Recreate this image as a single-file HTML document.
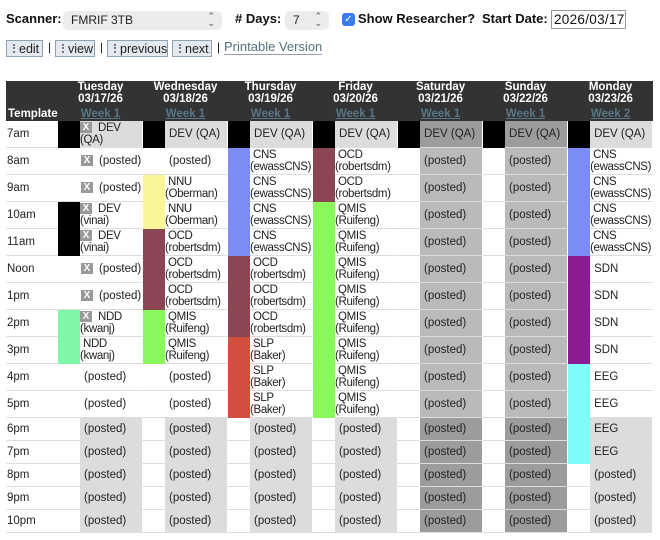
<!DOCTYPE html>
<html><head><meta charset="utf-8"><style>
*{box-sizing:border-box}
body{margin:0;width:660px;height:540px;background:#fff;font-family:"Liberation Sans",Arial,sans-serif;color:#222;position:relative;overflow:hidden}
.a{position:absolute}
.lbl{font-weight:bold;font-size:13px;color:#111}
.sel{background:#ececec;border-radius:5px;font-size:12px;padding:2px 0 0 8px;height:19px}
.sel i{position:absolute;right:7px;top:2px;font-style:normal;font-size:9px;color:#555;line-height:7px}
.btn{top:40px;height:17px;border:1px solid #8ea3b3;background:#e3e9ef;font-size:12.5px;padding:1px 2px 0 12px;color:#222}
.btn:before{content:"";position:absolute;left:6px;top:3px;width:2px;height:9px;border-left:2px dotted #778}
table{position:absolute;left:6px;top:81px;border-collapse:separate;border-spacing:0;table-layout:fixed;width:647px;font-size:11.5px}
th{background:#333;color:#fff;font-size:11.5px;line-height:12px;height:40px;vertical-align:bottom;padding:0 0 1px;font-weight:bold;overflow:hidden}
th u{color:#5a7787;display:block;margin-top:3px}
tr{height:27px}
tr.s{height:23px}
td{border-bottom:1px solid #ddd;padding:0;line-height:12.5px;vertical-align:middle;white-space:nowrap;overflow:hidden}
td.t{padding-left:1px}
td.c{border-right:1px solid #fff;padding-left:4px}
td.c2{border-right:1px solid #fff;padding-left:0;letter-spacing:-0.35px}
td.c2 span{padding-left:3px}
.x{display:inline-block;width:12px;height:11px;background:#999;color:#fff;font-weight:bold;font-size:10px;line-height:11px;text-align:center;margin:0 6px 0 -3px;vertical-align:top;letter-spacing:0}
.k{background:#000;border-bottom-color:#000}.y{background:#f9f59a;border-bottom-color:#f9f59a}.m{background:#8b4654;border-bottom-color:#8b4654}
.g{background:#88f85a;border-bottom-color:#88f85a}.b{background:#7b8cf7;border-bottom-color:#7b8cf7}.r{background:#d44d3f;border-bottom-color:#d44d3f}
.p{background:#8b1c93;border-bottom-color:#8b1c93}.cy{background:#80fbfc;border-bottom-color:#80fbfc}.mt{background:#7ff7a8;border-bottom-color:#7ff7a8}
.d{background:#dcdcdc}.L{background:#bababa}.D{background:#9c9c9c}
</style></head><body>
<div class="a lbl" style="left:6px;top:11px">Scanner:</div>
<div class="a sel" style="left:63px;top:11px;width:159px">FMRIF 3TB<i>⌃<br>⌄</i></div>
<div class="a lbl" style="left:235px;top:11px"># Days:</div>
<div class="a sel" style="left:285px;top:11px;width:44px">7<i>⌃<br>⌄</i></div>
<div class="a" style="left:342px;top:13px;width:13px;height:13px;border-radius:3px;background:#3b7cf0;color:#fff;font-size:10px;line-height:13px;text-align:center">✓</div>
<div class="a lbl" style="left:358px;top:11px">Show Researcher?</div>
<div class="a lbl" style="left:482px;top:11px">Start Date:</div>
<div class="a" style="left:551px;top:10px;width:75px;height:19px;border:1px solid #999;font-size:13.5px;padding:1px 0 0 2px;overflow:hidden;white-space:nowrap;letter-spacing:0.3px;color:#111">2026/03/17</div>
<div class="a btn" style="left:6px;width:37px">edit</div>
<div class="a" style="left:48px;top:40px;font-size:12px">|</div>
<div class="a btn" style="left:55px;width:40px">view</div>
<div class="a" style="left:100px;top:40px;font-size:12px">|</div>
<div class="a btn" style="left:107px;width:61px">previous</div>
<div class="a btn" style="left:172px;width:40px">next</div>
<div class="a" style="left:217px;top:40px;font-size:12px">|</div>
<div class="a" style="left:224px;top:40px;font-size:13px;color:#557080;border-bottom:1px solid #99a;line-height:14px">Printable Version</div>
<table>
<colgroup><col style="width:52px"><col style="width:22px"><col style="width:63px"><col style="width:22px"><col style="width:63px"><col style="width:22px"><col style="width:63px"><col style="width:22px"><col style="width:63px"><col style="width:22px"><col style="width:63px"><col style="width:22px"><col style="width:63px"><col style="width:22px"><col style="width:63px"></colgroup>
<tr style="height:40px"><th style="text-align:left;padding-left:2px">Template</th><th colspan="2">Tuesday<br>03/17/26<u>Week 1</u></th><th colspan="2">Wednesday<br>03/18/26<u>Week 1</u></th><th colspan="2">Thursday<br>03/19/26<u>Week 1</u></th><th colspan="2">Friday<br>03/20/26<u>Week 1</u></th><th colspan="2">Saturday<br>03/21/26<u>Week 1</u></th><th colspan="2">Sunday<br>03/22/26<u>Week 1</u></th><th colspan="2">Monday<br>03/23/26<u>Week 2</u></th></tr>
<tr><td class="t">7am</td><td class="k"></td><td class="c2 d"><span><b class="x">X</b></span>DEV<br>(QA)</td><td class="k"></td><td class="c d">DEV (QA)</td><td class="k"></td><td class="c d">DEV (QA)</td><td class="k"></td><td class="c d">DEV (QA)</td><td class="k"></td><td class="c D">DEV (QA)</td><td class="k"></td><td class="c D">DEV (QA)</td><td class="k"></td><td class="c d">DEV (QA)</td></tr>
<tr><td class="t">8am</td><td></td><td class="c"><b class="x">X</b>(posted)</td><td></td><td class="c">(posted)</td><td class="b"></td><td class="c2"><span>CNS</span><br>(ewassCNS)</td><td class="m"></td><td class="c2"><span>OCD</span><br>(robertsdm)</td><td></td><td class="c L">(posted)</td><td></td><td class="c L">(posted)</td><td class="b"></td><td class="c2"><span>CNS</span><br>(ewassCNS)</td></tr>
<tr><td class="t">9am</td><td></td><td class="c"><b class="x">X</b>(posted)</td><td class="y"></td><td class="c2"><span>NNU</span><br>(Oberman)</td><td class="b"></td><td class="c2"><span>CNS</span><br>(ewassCNS)</td><td class="m"></td><td class="c2"><span>OCD</span><br>(robertsdm)</td><td></td><td class="c L">(posted)</td><td></td><td class="c L">(posted)</td><td class="b"></td><td class="c2"><span>CNS</span><br>(ewassCNS)</td></tr>
<tr><td class="t">10am</td><td class="k"></td><td class="c2"><span><b class="x">X</b></span>DEV<br>(vinai)</td><td class="y"></td><td class="c2"><span>NNU</span><br>(Oberman)</td><td class="b"></td><td class="c2"><span>CNS</span><br>(ewassCNS)</td><td class="g"></td><td class="c2"><span>QMIS</span><br>(Ruifeng)</td><td></td><td class="c L">(posted)</td><td></td><td class="c L">(posted)</td><td class="b"></td><td class="c2"><span>CNS</span><br>(ewassCNS)</td></tr>
<tr><td class="t">11am</td><td class="k"></td><td class="c2"><span><b class="x">X</b></span>DEV<br>(vinai)</td><td class="m"></td><td class="c2"><span>OCD</span><br>(robertsdm)</td><td class="b"></td><td class="c2"><span>CNS</span><br>(ewassCNS)</td><td class="g"></td><td class="c2"><span>QMIS</span><br>(Ruifeng)</td><td></td><td class="c L">(posted)</td><td></td><td class="c L">(posted)</td><td class="b"></td><td class="c2"><span>CNS</span><br>(ewassCNS)</td></tr>
<tr><td class="t">Noon</td><td></td><td class="c"><b class="x">X</b>(posted)</td><td class="m"></td><td class="c2"><span>OCD</span><br>(robertsdm)</td><td class="m"></td><td class="c2"><span>OCD</span><br>(robertsdm)</td><td class="g"></td><td class="c2"><span>QMIS</span><br>(Ruifeng)</td><td></td><td class="c L">(posted)</td><td></td><td class="c L">(posted)</td><td class="p"></td><td class="c">SDN</td></tr>
<tr><td class="t">1pm</td><td></td><td class="c"><b class="x">X</b>(posted)</td><td class="m"></td><td class="c2"><span>OCD</span><br>(robertsdm)</td><td class="m"></td><td class="c2"><span>OCD</span><br>(robertsdm)</td><td class="g"></td><td class="c2"><span>QMIS</span><br>(Ruifeng)</td><td></td><td class="c L">(posted)</td><td></td><td class="c L">(posted)</td><td class="p"></td><td class="c">SDN</td></tr>
<tr><td class="t">2pm</td><td class="mt"></td><td class="c2"><span><b class="x">X</b></span>NDD<br>(kwanj)</td><td class="g"></td><td class="c2"><span>QMIS</span><br>(Ruifeng)</td><td class="m"></td><td class="c2"><span>OCD</span><br>(robertsdm)</td><td class="g"></td><td class="c2"><span>QMIS</span><br>(Ruifeng)</td><td></td><td class="c L">(posted)</td><td></td><td class="c L">(posted)</td><td class="p"></td><td class="c">SDN</td></tr>
<tr><td class="t">3pm</td><td class="mt"></td><td class="c2"><span>NDD</span><br>(kwanj)</td><td class="g"></td><td class="c2"><span>QMIS</span><br>(Ruifeng)</td><td class="r"></td><td class="c2"><span>SLP</span><br>(Baker)</td><td class="g"></td><td class="c2"><span>QMIS</span><br>(Ruifeng)</td><td></td><td class="c L">(posted)</td><td></td><td class="c L">(posted)</td><td class="p"></td><td class="c">SDN</td></tr>
<tr><td class="t">4pm</td><td></td><td class="c">(posted)</td><td></td><td class="c">(posted)</td><td class="r"></td><td class="c2"><span>SLP</span><br>(Baker)</td><td class="g"></td><td class="c2"><span>QMIS</span><br>(Ruifeng)</td><td></td><td class="c L">(posted)</td><td></td><td class="c L">(posted)</td><td class="cy"></td><td class="c">EEG</td></tr>
<tr><td class="t">5pm</td><td></td><td class="c">(posted)</td><td></td><td class="c">(posted)</td><td class="r"></td><td class="c2"><span>SLP</span><br>(Baker)</td><td class="g"></td><td class="c2"><span>QMIS</span><br>(Ruifeng)</td><td></td><td class="c L">(posted)</td><td></td><td class="c L">(posted)</td><td class="cy"></td><td class="c">EEG</td></tr>
<tr class="s"><td class="t">6pm</td><td></td><td class="c d">(posted)</td><td></td><td class="c d">(posted)</td><td></td><td class="c d">(posted)</td><td></td><td class="c d">(posted)</td><td></td><td class="c D">(posted)</td><td></td><td class="c D">(posted)</td><td class="cy"></td><td class="c d">EEG</td></tr>
<tr class="s"><td class="t">7pm</td><td></td><td class="c d">(posted)</td><td></td><td class="c d">(posted)</td><td></td><td class="c d">(posted)</td><td></td><td class="c d">(posted)</td><td></td><td class="c D">(posted)</td><td></td><td class="c D">(posted)</td><td class="cy"></td><td class="c d">EEG</td></tr>
<tr class="s"><td class="t">8pm</td><td></td><td class="c d">(posted)</td><td></td><td class="c d">(posted)</td><td></td><td class="c d">(posted)</td><td></td><td class="c d">(posted)</td><td></td><td class="c D">(posted)</td><td></td><td class="c D">(posted)</td><td></td><td class="c d">(posted)</td></tr>
<tr class="s"><td class="t">9pm</td><td></td><td class="c d">(posted)</td><td></td><td class="c d">(posted)</td><td></td><td class="c d">(posted)</td><td></td><td class="c d">(posted)</td><td></td><td class="c D">(posted)</td><td></td><td class="c D">(posted)</td><td></td><td class="c d">(posted)</td></tr>
<tr class="s"><td class="t">10pm</td><td></td><td class="c d">(posted)</td><td></td><td class="c d">(posted)</td><td></td><td class="c d">(posted)</td><td></td><td class="c d">(posted)</td><td></td><td class="c D">(posted)</td><td></td><td class="c D">(posted)</td><td></td><td class="c d">(posted)</td></tr>
</table>
</body></html>
